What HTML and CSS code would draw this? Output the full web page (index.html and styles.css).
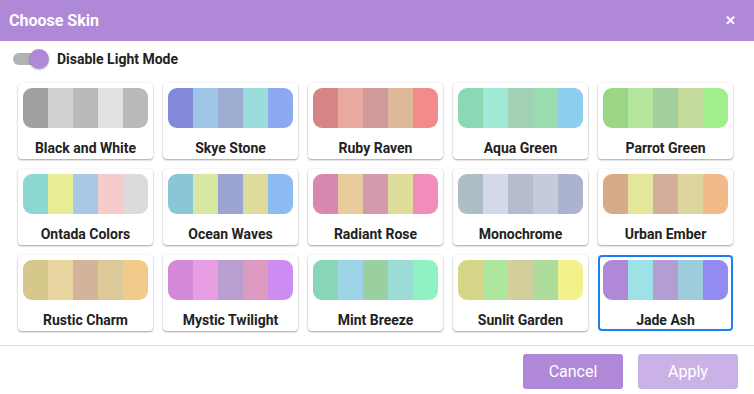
FILE: index.html
```html
<!DOCTYPE html>
<html>
<head>
<meta charset="utf-8">
<link rel="stylesheet" href="styles.css">
</head>
<body>
<div class="dialog">
  <header class="header">
    <span class="title">Choose Skin</span>
    <span class="close">&#x2715;</span>
  </header>
  <div class="toggle-row">
    <span class="toggle"><span class="track"></span><span class="knob"></span></span>
    <span class="toggle-label">Disable Light Mode</span>
  </div>
  <div class="grid">
    <div class="card"><div class="swatch"><i style="background:#a0a0a0"></i><i style="background:#d0d0d0"></i><i style="background:#bababa"></i><i style="background:#e2e2e2"></i><i style="background:#b9b9b9"></i></div><div class="name">Black and White</div></div>
    <div class="card"><div class="swatch"><i style="background:#8589d9"></i><i style="background:#9fc5e6"></i><i style="background:#9badd0"></i><i style="background:#9bdcdd"></i><i style="background:#8daaf0"></i></div><div class="name">Skye Stone</div></div>
    <div class="card"><div class="swatch"><i style="background:#d68585"></i><i style="background:#e8a9a0"></i><i style="background:#d09a9a"></i><i style="background:#dfb89a"></i><i style="background:#f28b8b"></i></div><div class="name">Ruby Raven</div></div>
    <div class="card"><div class="swatch"><i style="background:#8ad8b4"></i><i style="background:#a2e8d7"></i><i style="background:#a2d0b5"></i><i style="background:#9adcae"></i><i style="background:#8ccdf0"></i></div><div class="name">Aqua Green</div></div>
    <div class="card"><div class="swatch"><i style="background:#9ad683"></i><i style="background:#b4e79d"></i><i style="background:#a1d09d"></i><i style="background:#c4da9a"></i><i style="background:#9ff08c"></i></div><div class="name">Parrot Green</div></div>
    <div class="card"><div class="swatch"><i style="background:#8ad8d0"></i><i style="background:#e8ec94"></i><i style="background:#a9c8e6"></i><i style="background:#f4cccc"></i><i style="background:#dcdada"></i></div><div class="name">Ontada Colors</div></div>
    <div class="card"><div class="swatch"><i style="background:#88c6d8"></i><i style="background:#d8e8a2"></i><i style="background:#9ba4d3"></i><i style="background:#dedc9a"></i><i style="background:#8cbcf2"></i></div><div class="name">Ocean Waves</div></div>
    <div class="card"><div class="swatch"><i style="background:#d887b0"></i><i style="background:#e8cc9e"></i><i style="background:#d39aac"></i><i style="background:#dede9a"></i><i style="background:#f28cbc"></i></div><div class="name">Radiant Rose</div></div>
    <div class="card"><div class="swatch"><i style="background:#adbec6"></i><i style="background:#d4d9ea"></i><i style="background:#b5bbcd"></i><i style="background:#c5cbdb"></i><i style="background:#abb3cf"></i></div><div class="name">Monochrome</div></div>
    <div class="card"><div class="swatch"><i style="background:#d8ab88"></i><i style="background:#e4e69c"></i><i style="background:#d3ae9a"></i><i style="background:#dcd69c"></i><i style="background:#f2ba88"></i></div><div class="name">Urban Ember</div></div>
    <div class="card"><div class="swatch"><i style="background:#d6c88a"></i><i style="background:#e8d49e"></i><i style="background:#d3b49a"></i><i style="background:#dcca9a"></i><i style="background:#f2ca8a"></i></div><div class="name">Rustic Charm</div></div>
    <div class="card"><div class="swatch"><i style="background:#d488d8"></i><i style="background:#e89ee3"></i><i style="background:#ba9ecf"></i><i style="background:#dc9ac0"></i><i style="background:#cc8cf2"></i></div><div class="name">Mystic Twilight</div></div>
    <div class="card"><div class="swatch"><i style="background:#88d6b8"></i><i style="background:#9fd4e8"></i><i style="background:#9acf9f"></i><i style="background:#9cdcd6"></i><i style="background:#8ef2c3"></i></div><div class="name">Mint Breeze</div></div>
    <div class="card"><div class="swatch"><i style="background:#d6d688"></i><i style="background:#aee6a0"></i><i style="background:#d3cf9d"></i><i style="background:#addd9a"></i><i style="background:#f1f28a"></i></div><div class="name">Sunlit Garden</div></div>
    <div class="card selected"><div class="swatch"><i style="background:#b088d8"></i><i style="background:#9ee2e8"></i><i style="background:#b29ed3"></i><i style="background:#9dcddd"></i><i style="background:#928cf2"></i></div><div class="name">Jade Ash</div></div>
  </div>
  <footer class="footer">
    <button class="btn cancel">Cancel</button>
    <button class="btn apply">Apply</button>
  </footer>
</div>
</body>
</html>
```
FILE: styles.css
```css
* { box-sizing: border-box; }
html, body { margin: 0; padding: 0; background: #fff; }
body { font-family: Roboto, "Liberation Sans", sans-serif; color: #222; width: 754px; height: 394px; overflow: hidden; }
.dialog { display: flex; flex-direction: column; }
.header {
  height: 41px; background: #b088d8; color: #fff;
  display: flex; align-items: center; justify-content: space-between;
  padding: 0 18px 0 9px;
}
.title { font-size: 16px; font-weight: 700; }
.close { font-size: 13px; font-weight: 700; }
.toggle-row { height: 36px; display: flex; align-items: center; padding-left: 13px; }
.toggle { position: relative; width: 36px; height: 20px; display: inline-block; }
.track { position: absolute; left: 0; top: 4px; width: 30px; height: 12px; border-radius: 6px; background: #b2b2b2; }
.knob { position: absolute; left: 16px; top: 0; width: 20px; height: 20px; border-radius: 50%; background: #b088d8; box-shadow: 0 1px 2px rgba(0,0,0,.25); }
.toggle-label { font-size: 14px; font-weight: 700; margin-left: 8px; color: #222; }
.grid {
  display: grid; grid-template-columns: repeat(5, 135px); column-gap: 10px; row-gap: 10px;
  padding: 6px 0 0 18px;
}
.card {
  height: 76px; border-radius: 4px; background: #fff;
  box-shadow: 0 1px 2px rgba(0,0,0,.35), 0 0 2px rgba(0,0,0,.08);
  padding: 5px; display: flex; flex-direction: column; align-items: center;
}
.card.selected { border: 2px solid #1a7ff0; padding: 3px; box-shadow: none; }
.swatch { width: 125px; height: 40px; border-radius: 9px; overflow: hidden; display: flex; flex: none; }
.swatch i { flex: 1; }
.name { font-size: 14px; font-weight: 700; margin-top: 12px; line-height: 16px; color: #222; }
.footer {
  margin-top: 14px; border-top: 1px solid #e2e2e2;
  display: flex; justify-content: flex-end; gap: 15px; padding: 8px 16px 0 0;
}
.btn {
  width: 100px; height: 35px; border: none; border-radius: 3px; color: #fff;
  font-family: Roboto, "Liberation Sans", sans-serif; font-size: 16px;
}
.cancel { background: #b088d8; }
.apply { background: #cab2e6; }
```
